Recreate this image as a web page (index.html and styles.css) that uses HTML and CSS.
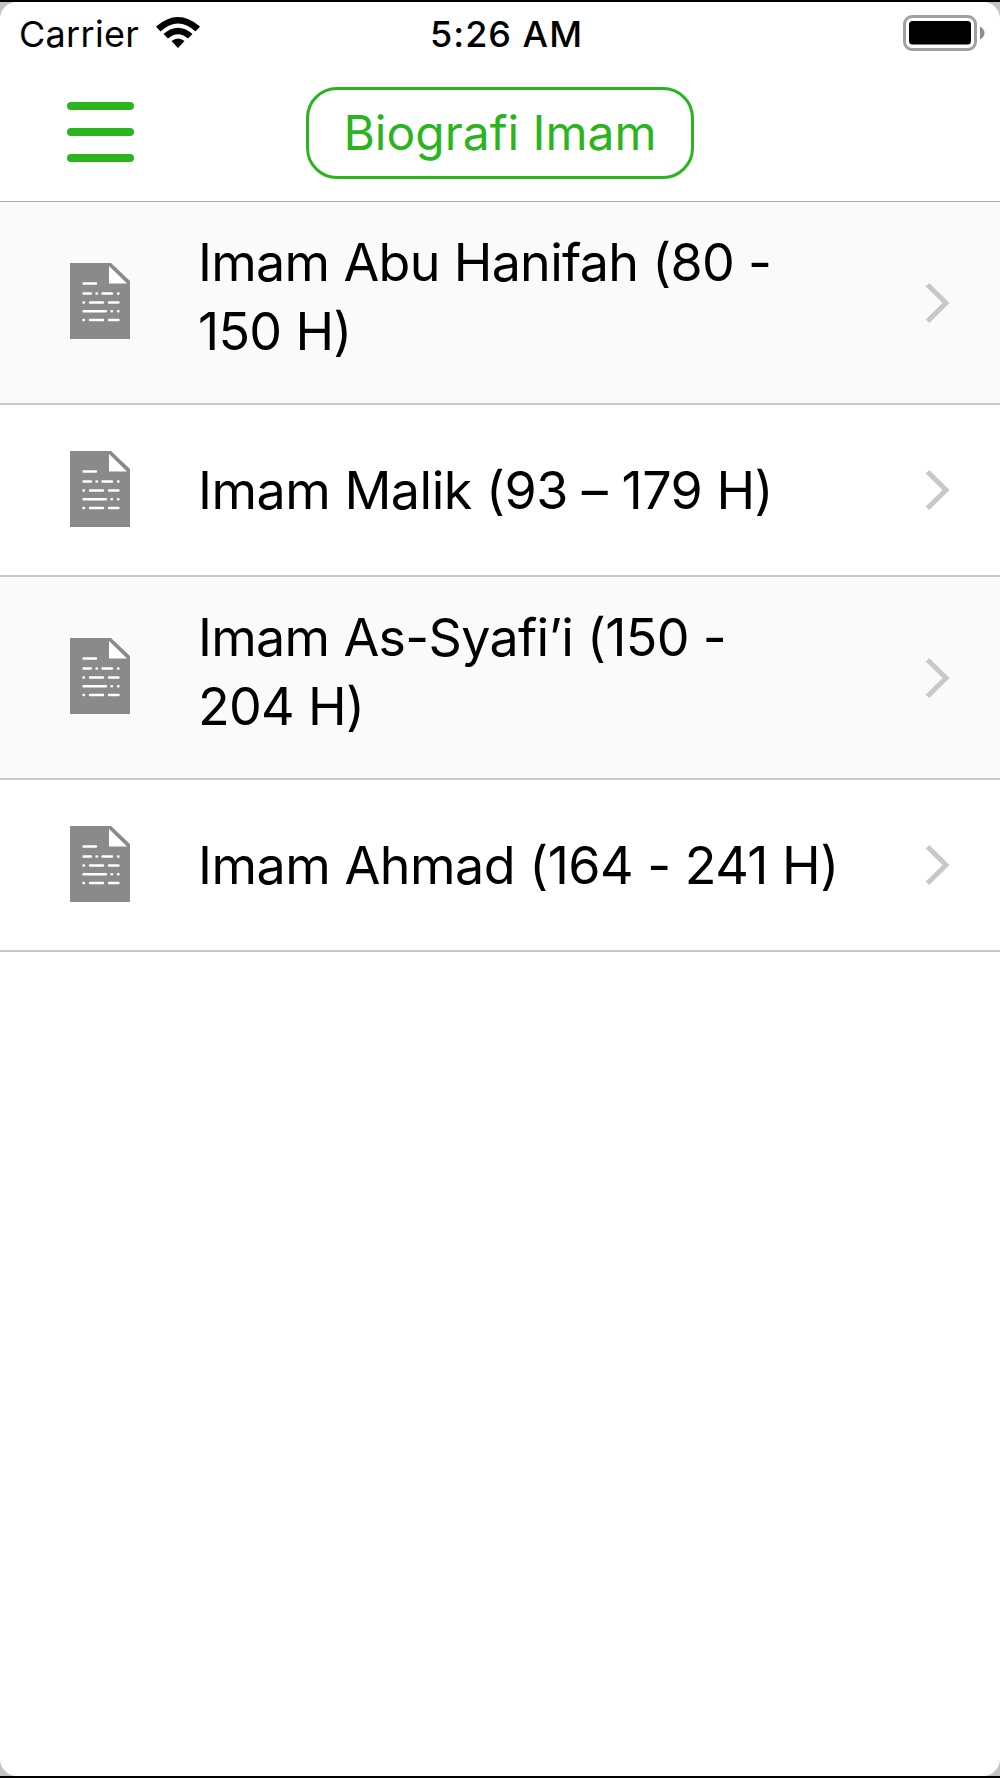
FILE: index.html
```
<!DOCTYPE html>
<html lang="id">
<head>
    <meta charset="UTF-8">
    <meta name="viewport" content="width=device-width, initial-scale=1.0">
    <title>Biografi Imam</title>
    <link rel="stylesheet" href="styles.css">
</head>
<body>
    <!-- Shared icons -->
    <svg class="icon-defs" width="0" height="0">
        <symbol id="icon-doc" viewBox="0 0 60 76">
            <path fill="#8a8a8a" d="M0 0H41L60 18V76H0Z"/>
            <path fill="#fff" d="M39 3V20.500H57Z"/>
            <path stroke="#fff" stroke-width="2.400" stroke-linecap="round" d="M13.500 20.500H26M13.500 30.500H21M26.500 30.500H27M32.500 30.500H42M48 30.500H48.500M13.500 39.500H14M20 39.500H33M39 39.500H48.500M13.500 48.300H36M41.500 48.300H42M48 48.300H48.500M13.500 57H14M20 57H33M39 57H48.500"/>
        </symbol>
        <symbol id="icon-chevron" viewBox="0 0 26 42">
            <path fill="none" stroke="#c7c7cc" stroke-width="5" d="M2.500 2.700L21 21L2.500 39.300"/>
        </symbol>
    </svg>

    <div class="phone">
        <div class="status-bar">
            <div class="status-left">
                <span class="carrier">Carrier</span>
                <svg class="wifi" width="44" height="32" viewBox="0 0 44 32">
                    <path d="M0 9.500Q22 -9.500 44 9.500L39.500 14.500Q22 -1.500 4.500 14.500Z"/>
                    <path d="M7.500 17Q22 4.500 36.500 17L32 21.500Q22 13 12 21.500Z"/>
                    <path d="M15.500 24Q22 19 28.500 24L22 31Z"/>
                </svg>
            </div>
            <span class="time">5:26 AM</span>
            <svg class="battery" width="82" height="36" viewBox="0 0 82 36">
                <rect x="1.500" y="1.500" width="71" height="33" rx="7.500" fill="none" stroke="#a0a0a0" stroke-width="3"/>
                <rect x="6" y="6" width="62" height="23.500" rx="3.500"/>
                <path fill="#8e8e8e" d="M77 11.500Q81.500 14 81.500 18T77 24.500Z"/>
            </svg>
        </div>

        <div class="nav-bar">
            <button type="button" class="menu-button" aria-label="Menu">
                <span></span>
                <span></span>
                <span></span>
            </button>
            <h1 class="title">Biografi Imam</h1>
        </div>

        <ul class="list">
            <li class="item two-lines">
                <svg class="doc"><use href="#icon-doc"/></svg>
                <span class="name">Imam Abu Hanifah (80 -<br>150 H)</span>
                <svg class="chevron"><use href="#icon-chevron"/></svg>
            </li>
            <li class="item">
                <svg class="doc"><use href="#icon-doc"/></svg>
                <span class="name">Imam Malik (93 – 179 H)</span>
                <svg class="chevron"><use href="#icon-chevron"/></svg>
            </li>
            <li class="item two-lines">
                <svg class="doc"><use href="#icon-doc"/></svg>
                <span class="name">Imam As-Syafi’i (150 -<br>204 H)</span>
                <svg class="chevron"><use href="#icon-chevron"/></svg>
            </li>
            <li class="item">
                <svg class="doc"><use href="#icon-doc"/></svg>
                <span class="name">Imam Ahmad (164 - 241 H)</span>
                <svg class="chevron"><use href="#icon-chevron"/></svg>
            </li>
        </ul>
    </div>
</body>
</html>
```
FILE: styles.css
```
* {
    box-sizing: border-box;
}
body {
    margin: 0;
    height: 1778px;
    background-color: #c4c4c4;
    border-top: 2px solid black;
    border-bottom: 2px solid black;
    font-family: Inter, "Liberation Sans", sans-serif;
    color: black;
}
.icon-defs {
    display: none;
}
.phone {
    height: 100%;
    background-color: white;
    border-radius: 17px;
    overflow: hidden;
}

/* Status bar */
.status-bar {
    display: grid;
    grid-template-columns: 1fr auto 1fr;
    align-items: center;
    height: 64px;
    padding: 0 15px 0 19px;
    font-size: 36px;
    line-height: 44px;
}
.status-left {
    display: flex;
    align-items: center;
    gap: 17px;
}
.carrier {
    letter-spacing: 0.3px;
}
.wifi {
    margin-bottom: 3px;
}
.time {
    font-weight: 550;
    letter-spacing: 1px;
    padding-left: 9px;
}
.battery {
    justify-self: end;
    margin-bottom: 2px;
}

/* Navigation bar */
.nav-bar {
    display: grid;
    grid-template-columns: 1fr 388px 1fr;
    align-items: center;
    height: 135px;
    padding-bottom: 2px;
}
.menu-button {
    display: flex;
    flex-direction: column;
    gap: 18px;
    width: 67px;
    margin-left: 67px;
    margin-bottom: 2px;
    padding: 0;
    border: none;
    background: none;
}
.menu-button span {
    height: 8px;
    border-radius: 4px;
    background-color: #2cb41f;
}
.title {
    height: 92px;
    margin: 0;
    border: 3px solid #2cb41f;
    border-radius: 31px;
    color: #2cb41f;
    font-size: 48px;
    font-weight: 400;
    line-height: 86px;
    text-align: center;
}

/* List */
.list {
    margin: 0;
    padding: 0;
    list-style: none;
    border-top: 1px solid #acacac;
}
.item {
    display: flex;
    align-items: center;
    height: 172px;
    padding: 0 49px 0 70px;
    border-bottom: 2px solid #c8c7cc;
}
.two-lines {
    height: 203px;
    background-color: #fafafa;
}
.doc {
    width: 60px;
    height: 76px;
    margin-right: 68px;
    margin-bottom: 3px;
    flex: none;
}
.name {
    flex: 1;
    font-size: 52px;
    line-height: 69px;
    letter-spacing: -0.5px;
    white-space: nowrap;
}
.two-lines .name {
    padding-bottom: 12px;
    letter-spacing: -0.7px;
}
.chevron {
    width: 26px;
    height: 42px;
    flex: none;
}
```
